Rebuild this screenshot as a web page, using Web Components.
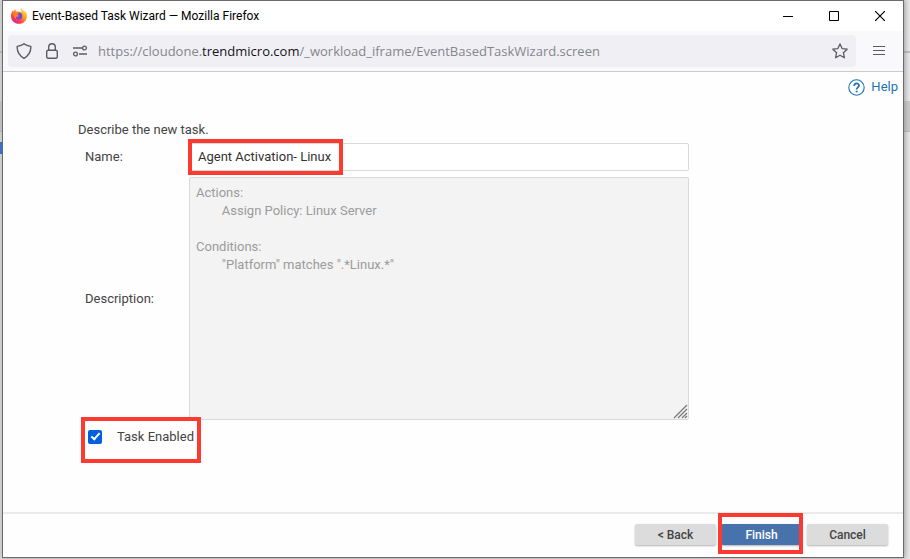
<!DOCTYPE html>
<html lang="en">
<head>
<meta charset="utf-8">
<title>Event-Based Task Wizard</title>
<style>
    html, body { height: 100%; }
    body {
        margin: 0;
        box-sizing: border-box;
        overflow: hidden;
        display: flex;
        padding: 0 6px 1px 2px;
        font: 13px/18px Roboto, "Liberation Sans", sans-serif;
        color: #444;
        /* the page that lies behind the window */
        background:
            linear-gradient(#3b78d8, #3b78d8) 0 142px / 2px 12px no-repeat,
            linear-gradient(transparent 51px, #bcbcbc 51px 53px, transparent 53px 101px, #c9c9c9 101px 131px, #bcbcbc 131px 132px, transparent 132px),
            linear-gradient(to left, #e9e9e9, #d8d8d8 6px);
    }
    browser-window { flex: 1; }
</style>
</head>
<body>
<browser-window>
    <title-bar slot="title" text="Event-Based Task Wizard — Mozilla Firefox"></title-bar>
    <address-bar slot="toolbar" scheme="https://cloudone." domain="trendmicro.com" path="/_workload_iframe/EventBasedTaskWizard.screen"></address-bar>
    <task-wizard></task-wizard>
</browser-window>

<script>
    function attach(element, html) {
        const template = document.createElement('template');
        template.innerHTML = html;
        element.attachShadow({ mode: 'open' }).appendChild(template.content.cloneNode(true));
    }

    class BrowserWindow extends HTMLElement {
        constructor() {
            super();
            attach(this, `
                <style>
                    :host {
                        display: flex;
                        flex-direction: column;
                        border: 1px solid #6b6b6b;
                        background: #fefefe;
                        box-sizing: border-box;
                        min-width: 0;
                        box-shadow: 1px 0 5px rgba(0, 0, 0, .25);
                    }
                    ::slotted(task-wizard) { flex: 1; }
                </style>
                <slot name="title"></slot>
                <slot name="toolbar"></slot>
                <slot></slot>
            `);
        }
    }

    class TitleBar extends HTMLElement {
        constructor() {
            super();
            attach(this, `
                <style>
                    :host {
                        display: flex;
                        align-items: center;
                        height: 30px;
                        padding-left: 8px;
                        background: #fff;
                        color: #000;
                        font: 12px/16px Roboto, sans-serif;
                    }
                    .text { flex: 1; margin-left: 5px; white-space: nowrap; }
                    button {
                        width: 46px;
                        height: 30px;
                        padding: 0;
                        border: 0;
                        background: none;
                    }
                    svg { display: block; margin: auto; }
                </style>
                <svg width="16" height="16" viewBox="0 0 16 16">
                    <defs>
                        <linearGradient id="flame" x1=".85" y1=".1" x2=".2" y2=".95">
                            <stop offset="0" stop-color="#ffe14a"/>
                            <stop offset=".4" stop-color="#ff9a1f"/>
                            <stop offset=".7" stop-color="#ff4350"/>
                            <stop offset="1" stop-color="#e3188c"/>
                        </linearGradient>
                    </defs>
                    <path fill="url(#flame)" d="M10 0c-1 2 .4 2.700 1.200 3.800L5.800 3.600C4.800 3 4.500 2 4.500 1.200 3.400 1.700 2.900 2.600 2.600 3.500L1.800 2.600C.7 4.300 0 6 0 8.200c0 4.400 3.500 7.600 8 7.600s8-3.400 8-7.800c0-2.200-.8-3.800-2-4.900l.2 1.200C13 2.400 11 2 10 0z"/>
                    <circle cx="7.800" cy="8" r="3.500" fill="#7246dc"/>
                    <path fill="#ff8420" d="M2.600 5.500c1-1.400 2.600-1.500 3.700-1 .6 0 1.400 0 1.700.5-.2.700-1.400.8-1.500 1.500 0 .8 1 1.300 1.800 1-.4 1-1.500 1.400-2.500 1.100C5 9 5 10 5.700 11 3.500 10.200 2.200 7.800 2.600 5.500z"/>
                </svg>
                <span class="text"></span>
                <button aria-label="Minimize"><svg width="10" height="10"><path d="M0 5.500h10" stroke="#000"/></svg></button>
                <button aria-label="Maximize"><svg width="10" height="10"><path d="M.5.5h9v9h-9z" fill="none" stroke="#000"/></svg></button>
                <button aria-label="Close"><svg width="10" height="10"><path d="M0 0l10 10M10 0L0 10" stroke="#000" stroke-width="1.200"/></svg></button>
            `);
        }

        connectedCallback() {
            this.shadowRoot.querySelector('.text').textContent = this.getAttribute('text');
        }
    }

    class AddressBar extends HTMLElement {
        constructor() {
            super();
            attach(this, `
                <style>
                    :host {
                        display: flex;
                        align-items: center;
                        height: 40px;
                        padding-left: 5px;
                        border-bottom: 1px solid #ccc;
                        background: #f9f9fb;
                        font: 13px/18px "Open Sans", sans-serif;
                        color: #85858d;
                    }
                    .field {
                        flex: 1;
                        min-width: 0;
                        display: flex;
                        align-items: center;
                        height: 32px;
                        padding: 0 8px;
                        border-radius: 4px;
                        background: #f0f0f4;
                        box-sizing: border-box;
                    }
                    .icons { display: flex; gap: 12px; margin-right: 10px; }
                    .url { flex: 1; white-space: nowrap; overflow: hidden; }
                    .domain { color: #15141a; }
                    svg { display: block; fill: none; stroke: #5b5b66; }
                    button { padding: 0; border: 0; background: none; }
                    .menu { width: 45px; height: 32px; margin-right: 2px; }
                    .menu svg { margin: auto; }
                </style>
                <div class="field">
                    <div class="icons">
                        <svg width="16" height="16" viewBox="0 0 16 16" stroke-width="1.400" stroke-linejoin="round"><path d="M8 .8C9.800 2.300 12 3 14.800 3.400c.3 5-1.600 9-6.800 11.900C2.800 12.400.9 8.400 1.200 3.400 4 3 6.200 2.300 8 .8z"/></svg>
                        <svg width="16" height="16" viewBox="0 0 16 16" stroke-width="1.400"><rect x="2.700" y="7.200" width="10.600" height="8" rx="1.500"/><path d="M4.700 7V4a3.300 3.300 0 0 1 6.600 0v3"/></svg>
                        <svg width="16" height="16" viewBox="0 0 16 16" stroke-width="1.300"><path d="M1 5h9M7 11h8"/><circle cx="12.500" cy="5" r="1.900"/><circle cx="3.500" cy="11" r="1.900"/></svg>
                    </div>
                    <div class="url"><span class="scheme"></span><span class="domain"></span><span class="path"></span></div>
                    <button aria-label="Bookmark this page"><svg width="16" height="16" viewBox="0 0 16 16" stroke-width="1.300" stroke-linejoin="round"><path d="M8 .9l2.100 4.700 5.100.6-3.800 3.500 1 5.100L8 12.300l-4.400 2.500 1-5.100L.8 6.200l5.100-.6z"/></svg></button>
                </div>
                <button class="menu" aria-label="Open application menu"><svg width="12" height="10"><path d="M0 .5h12M0 4.500h12M0 8.500h12" stroke-width="1.200"/></svg></button>
            `);
        }

        connectedCallback() {
            for (const name of ['scheme', 'domain', 'path']) {
                this.shadowRoot.querySelector('.' + name).textContent = this.getAttribute(name);
            }
        }
    }

    // Red frame drawn over whatever positioned box contains it
    class MarkBox extends HTMLElement {
        constructor() {
            super();
            attach(this, `
                <style>
                    :host {
                        display: block;
                        position: absolute;
                        box-sizing: border-box;
                        border: 4px solid #fc3a2f;
                        pointer-events: none;
                    }
                </style>
            `);
        }
    }

    class WizardButton extends HTMLElement {
        constructor() {
            super();
            attach(this, `
                <style>
                    :host { display: block; }
                    button {
                        display: block;
                        width: 81px;
                        height: 21px;
                        padding: 0;
                        border: 0;
                        border-radius: 2px;
                        background: #dcdcdc;
                        box-shadow: 0 1px 2px rgba(0, 0, 0, .3);
                        color: #444;
                        font: 500 12px/20px Roboto, sans-serif;
                    }
                    :host([primary]) button { background: #4872ac; color: #fff; }
                </style>
                <button type="button"><slot></slot></button>
            `);
        }
    }

    class TaskWizard extends HTMLElement {
        constructor() {
            super();
            attach(this, `
                <style>
                    :host { display: flex; flex-direction: column; min-height: 0; }
                    .help {
                        align-self: flex-end;
                        display: flex;
                        align-items: center;
                        gap: 6px;
                        margin: 6px 5px 0 0;
                        color: #1c75b1;
                        text-decoration: none;
                    }
                    main { flex: 1; padding: 25px 75px 0; }
                    p { margin: 0; }
                    form {
                        display: grid;
                        grid-template-columns: 104px minmax(0, 500px);
                        align-items: center;
                        row-gap: 6px;
                        padding: 4px 0 0 7px;
                    }
                    .field, .check, .primary { position: relative; }
                    input[type=text], textarea {
                        display: block;
                        box-sizing: border-box;
                        width: 100%;
                        margin: 0;
                        border: 1px solid #d9d9d9;
                        border-radius: 2px;
                        font: inherit;
                        color: #333;
                        background: #fff;
                    }
                    input[type=text] { height: 28px; padding: 0 8px 2px; }
                    textarea {
                        height: 243px;
                        padding: 6px;
                        background: #f3f3f3;
                        color: #9b9b9b;
                        tab-size: 8;
                        resize: none;
                        overflow: hidden;
                    }
                    .grip { position: absolute; right: 1px; bottom: 1px; stroke: #777; }
                    .check {
                        grid-column: 1 / -1;
                        justify-self: start;
                        display: flex;
                        align-items: center;
                        gap: 15px;
                        padding: 2px 0 0 3px;
                    }
                    .check input {
                        appearance: none;
                        width: 14px;
                        height: 14px;
                        margin: 0;
                        border-radius: 2px;
                        background: #0060df;
                        display: grid;
                    }
                    .check input:checked::before {
                        content: "";
                        width: 7px;
                        height: 3px;
                        margin: 3px 0 0 3px;
                        border: solid #fff;
                        border-width: 0 0 2px 2px;
                        transform: rotate(-48deg);
                    }
                    .field.name mark-box { inset: -4px auto -4px -1px; width: 155px; }
                    .check mark-box { inset: -9px -7px -17px -4px; }
                    .primary mark-box { inset: -11px -1px -9px -3px; }
                    footer {
                        display: flex;
                        justify-content: flex-end;
                        gap: 5px;
                        padding: 10px 15px 12px;
                        border-top: 2px solid #ebebeb;
                    }
                </style>
                <a class="help" href="#help">
                    <svg width="17" height="17" viewBox="0 0 17 17" fill="none" stroke="#1c75b1">
                        <circle cx="8.500" cy="8.500" r="7.700" stroke-width="1.100"/>
                        <path d="M6.200 6.900c0-3.300 4.800-3.200 4.800-.4 0 1.800-2.400 1.900-2.400 4" stroke-width="1.700"/>
                        <path d="M8.600 11.700v1.700" stroke-width="1.800"/>
                    </svg>
                    <span>Help</span>
                </a>
                <main>
                    <p>Describe the new task.</p>
                    <form>
                        <label for="name">Name:</label>
                        <div class="field name">
                            <input type="text" id="name" value="Agent Activation- Linux">
                            <mark-box></mark-box>
                        </div>
                        <label for="description">Description:</label>
                        <div class="field">
                            <textarea id="description" disabled></textarea>
                            <svg class="grip" width="15" height="15"><path d="M1 14L14 1M5 14l9-9M9 14l5-5M12 14l2-2" stroke-width="1.200"/></svg>
                        </div>
                        <div class="check">
                            <input type="checkbox" id="enabled" checked>
                            <label for="enabled">Task Enabled</label>
                            <mark-box></mark-box>
                        </div>
                    </form>
                </main>
                <footer>
                    <wizard-button>&lt; Back</wizard-button>
                    <div class="primary"><wizard-button primary>Finish</wizard-button><mark-box></mark-box></div>
                    <wizard-button>Cancel</wizard-button>
                </footer>
            `);
        }

        connectedCallback() {
            this.shadowRoot.querySelector('textarea').value = [
                'Actions:',
                '\tAssign Policy: Linux Server',
                '',
                'Conditions:',
                '\t"Platform" matches ".*Linux.*"'
            ].join('\n');
        }
    }

    customElements.define('browser-window', BrowserWindow);
    customElements.define('title-bar', TitleBar);
    customElements.define('address-bar', AddressBar);
    customElements.define('mark-box', MarkBox);
    customElements.define('wizard-button', WizardButton);
    customElements.define('task-wizard', TaskWizard);
</script>
</body>
</html>
